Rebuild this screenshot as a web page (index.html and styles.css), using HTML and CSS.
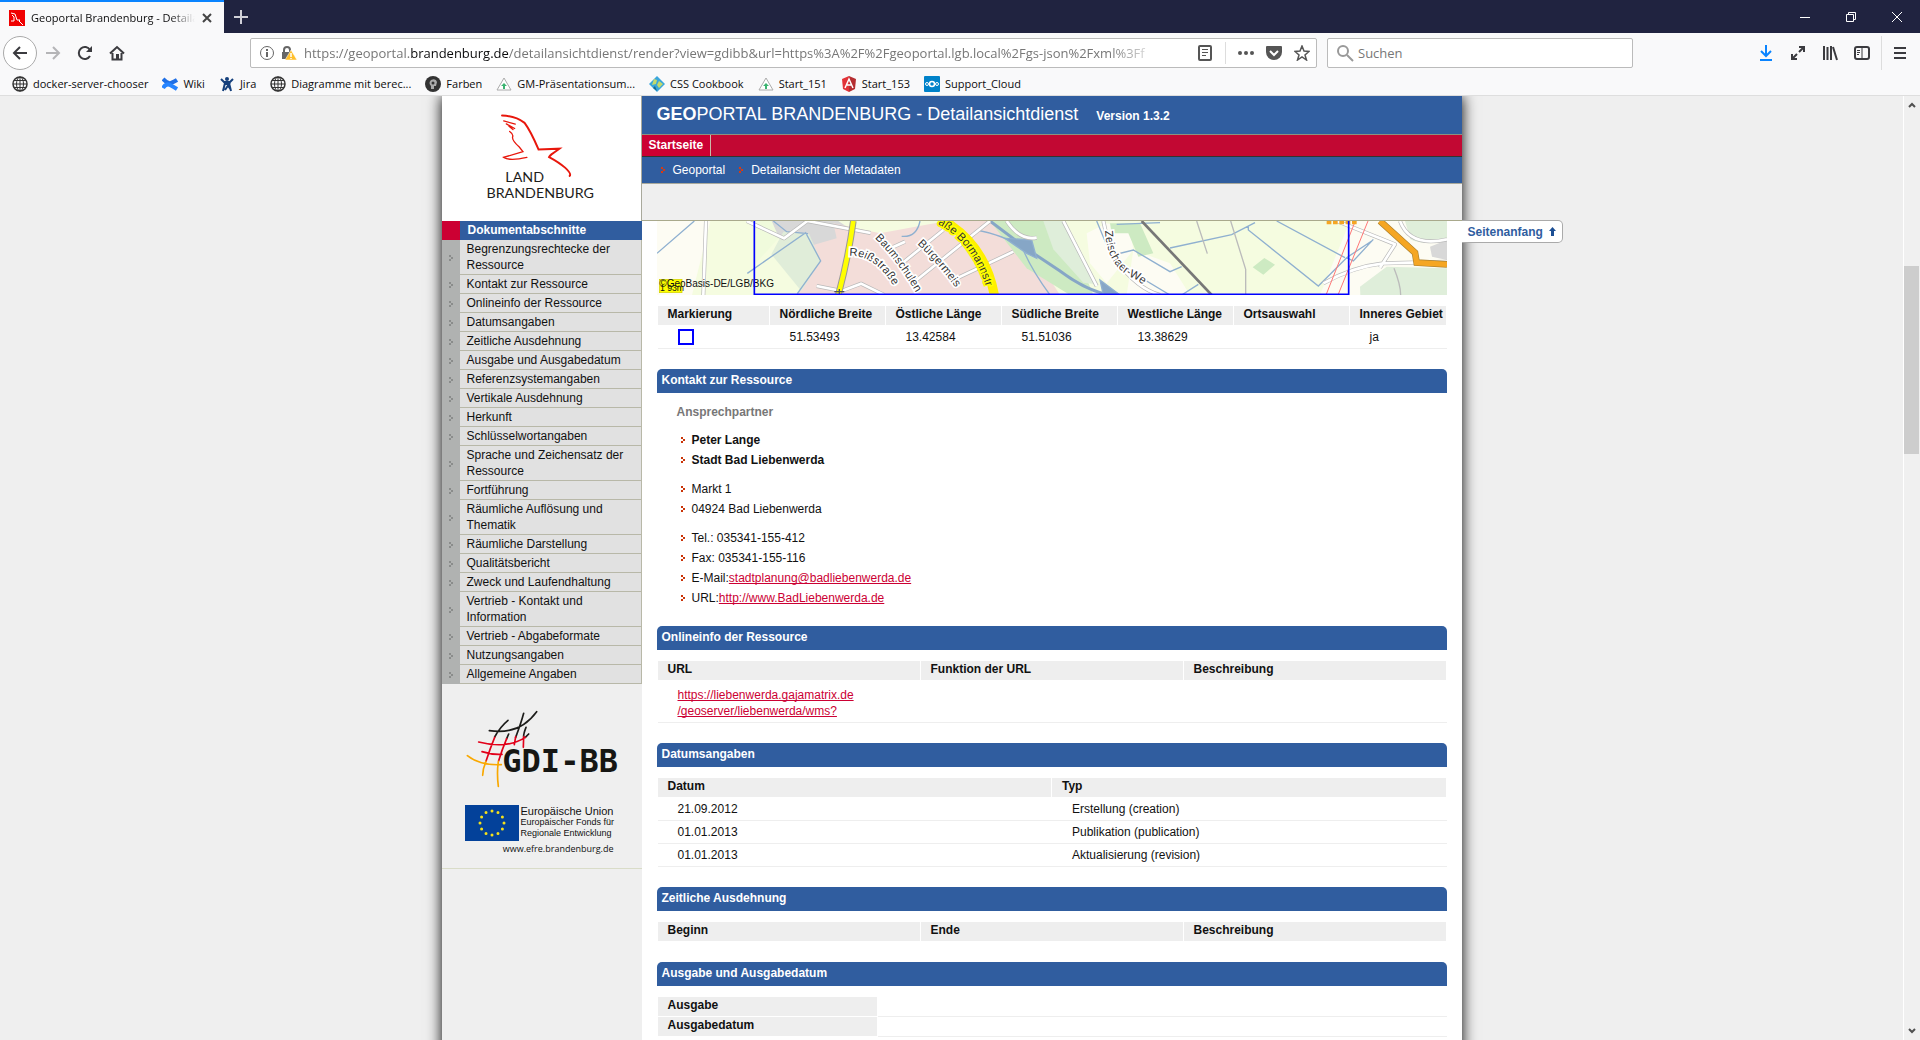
FILE: index.html
```html
<!DOCTYPE html>
<html lang="de">
  <head>
    <meta charset="UTF-8" />
    <title>Geoportal Brandenburg - Detailansichtdienst</title>
    <link rel="stylesheet" href="styles.css">
  </head>
  <body>
    <header class="browser">
      <div class="tabs">
        <div class="tab">
          <svg class="favicon" width="16" height="16" viewBox="0 0 16 16"><rect width="16" height="16" fill="#f00000" /><path d="M2 3l4 1 2 6h3l-1 1 4 4M3 5l2 2v4H2" fill="none" stroke="#fff" /></svg>
          <span class="tab-title">Geoportal Brandenburg - Detailansicht</span>
          <button aria-label="Tab schließen"><svg width="12" height="12" viewBox="0 0 12 12"><path d="M2 2l8 8M10 2l-8 8" stroke="#444" stroke-width="2" /></svg></button>
        </div>
        <button class="new-tab" aria-label="Neuer Tab"><svg width="14" height="14" viewBox="0 0 14 14"><path d="M7 0v14M0 7h14" stroke="#d0d0d8" stroke-width="2" /></svg></button>
        <div class="window-buttons">
          <button aria-label="Minimieren"><svg width="10" height="10" viewBox="0 0 10 10"><path d="M0 5.500h10" stroke="#fff" /></svg></button>
          <button aria-label="Verkleinern"><svg width="10" height="10" viewBox="0 0 10 10"><path d="M.5 2.500h7v7h-7zM2.500 2.500v-2h7v7h-2" fill="none" stroke="#fff" /></svg></button>
          <button aria-label="Schließen"><svg width="10" height="10" viewBox="0 0 10 10"><path d="M0 0l10 10M10 0L0 10" stroke="#fff" /></svg></button>
        </div>
      </div>

      <div class="toolbar">
        <button class="back" aria-label="Zurück"><svg width="16" height="16" viewBox="0 0 16 16"><path d="M15 8H2M8 2L2 8l6 6" fill="none" stroke="#3b3b3f" stroke-width="2" /></svg></button>
        <button class="tool" aria-label="Vor"><svg width="16" height="16" viewBox="0 0 16 16"><path d="M1 8h13M8 2l6 6-6 6" fill="none" stroke="#b5b5b7" stroke-width="2" /></svg></button>
        <button class="tool" aria-label="Neu laden"><svg width="16" height="16" viewBox="0 0 16 16"><path d="M13 11a6 6 0 1 1 0-6" fill="none" stroke="#3b3b3f" stroke-width="2" /><path d="M15 1v6H9z" fill="#3b3b3f" /></svg></button>
        <button class="tool" aria-label="Startseite"><svg width="16" height="16" viewBox="0 0 16 16"><path d="M1 8.500L8 2l7 6.500M3.500 8v6.500h9V8" fill="none" stroke="#3b3b3f" stroke-width="2" /><path d="M7 9h3v5H7z" fill="#3b3b3f" /></svg></button>
        <form class="urlbar">
          <svg width="16" height="16" viewBox="0 0 16 16"><circle cx="8" cy="8" r="6.500" fill="none" stroke="#666" /><path d="M8 7v5M8 4v2" stroke="#666" stroke-width="2" /></svg>
          <svg class="lock" width="16" height="16" viewBox="0 0 16 16"><path d="M3 7V5a3 3 0 0 1 6 0v2" fill="none" stroke="#666" stroke-width="2" /><path d="M1 7h10v7H1z" fill="#666" /><path d="M10 5l6 10H4z" fill="#ffbf2b" stroke="#fff" stroke-width=".5" /><path d="M10 8v4M10 13v1" stroke="#fff" stroke-width="1.500" /></svg>
          <div class="url" tabindex="0" role="textbox" aria-label="Adresse">https://geoportal.<b>brandenburg.de</b>/detailansichtdienst/render?view=gdibb&amp;url=https%3A%2F%2Fgeoportal.lgb.local%2Fgs-json%2Fxml%3Ff</div>
          <button type="button" aria-label="Leseansicht"><svg width="16" height="16" viewBox="0 0 16 16"><rect x="2" y="1" width="12" height="14" rx="1" fill="none" stroke="#555" stroke-width="2" /><path d="M5 4.500h6M5 7.500h6M5 10.500h4" stroke="#555" /></svg></button>
          <span class="divider"></span>
          <button type="button" aria-label="Aktionen"><svg width="16" height="16" viewBox="0 0 16 16" fill="#555"><circle cx="2" cy="8" r="2" /><circle cx="8" cy="8" r="2" /><circle cx="14" cy="8" r="2" /></svg></button>
          <button type="button" aria-label="Pocket"><svg width="16" height="16" viewBox="0 0 16 16"><path d="M1 1h14q1 0 1 1v5a8 8 0 0 1-16 0V2q0-1 1-1z" fill="#555" /><path d="M4 6l4 4 4-4" fill="none" stroke="#fff" stroke-width="2" /></svg></button>
          <button type="button" aria-label="Lesezeichen"><svg width="16" height="16" viewBox="0 0 16 16"><path d="M8 1l2 5 5 .5-4 3.500 1.500 5L8 12l-4.500 3L5 10 1 6.500 6 6z" fill="none" stroke="#555" stroke-width="1.500" /></svg></button>
        </form>
        <form class="searchbar">
          <svg width="18" height="18" viewBox="0 0 18 18"><circle cx="7" cy="7" r="5" fill="none" stroke="#999" stroke-width="2" /><path d="M11 11l6 6" stroke="#999" stroke-width="2" /></svg>
          <input type="text" placeholder="Suchen" aria-label="Suchen" />
        </form>
        <div class="tools">
          <button class="tool" aria-label="Downloads"><svg width="16" height="16" viewBox="0 0 16 16"><path d="M8 0v11M3 6l5 5 5-5M2 15h12" fill="none" stroke="#0a84ff" stroke-width="2" /></svg></button>
          <button class="tool" aria-label="Vollbild"><svg width="16" height="16" viewBox="0 0 16 16"><path d="M9 7l5-5M9 2h5v5M7 9l-5 5M2 9v5h5" fill="none" stroke="#3b3b3f" stroke-width="2" /></svg></button>
          <button class="tool" aria-label="Bibliothek"><svg width="16" height="16" viewBox="0 0 16 16"><path d="M2 1v14M5.500 2v13M9 1v14M11 2l4 13" stroke="#3b3b3f" stroke-width="2" /></svg></button>
          <button class="tool" aria-label="Seitenleisten"><svg width="16" height="16" viewBox="0 0 16 16"><rect x="1" y="2" width="14" height="12" rx="2" fill="none" stroke="#3b3b3f" stroke-width="2" /><path d="M8 2v12" stroke="#3b3b3f" /><path d="M3 5.500h3M3 7.500h3M3 9.500h2" stroke="#3b3b3f" /></svg></button>
          <button class="tool menu" aria-label="Menü"><svg width="16" height="16" viewBox="0 0 16 16"><path d="M2 3h12M2 8h12M2 13h12" stroke="#3b3b3f" stroke-width="2" /></svg></button>
        </div>
      </div>

      <nav class="bookmarks">
        <a href="#"><svg width="16" height="16" viewBox="0 0 16 16" fill="none" stroke="#333"><circle cx="8" cy="8" r="7" stroke-width="1.500" /><ellipse cx="8" cy="8" rx="3.500" ry="7" /><path d="M8 1v14M1 8h14M2 4.500h12M2 11.500h12" /></svg>docker-server-chooser</a>
        <a href="#"><svg width="16" height="16" viewBox="0 0 16 16" fill="none" stroke="#2684ff" stroke-width="4"><path d="M1 3q5 5 8 4t6-3" stroke="#1f6fe5" /><path d="M1 12q3-5 7-3t7 4" /></svg>Wiki</a>
        <a href="#"><svg width="16" height="16" viewBox="0 0 16 16"><circle cx="8" cy="3" r="2" fill="#15407c" /><path d="M2 3l4 4-2 8M14 3l-4 4 2 8M5 6h6M6 8h4l-4 6M10 8v3l2 3" fill="none" stroke="#15407c" stroke-width="2" /></svg>Jira</a>
        <a href="#"><svg width="16" height="16" viewBox="0 0 16 16" fill="none" stroke="#333"><circle cx="8" cy="8" r="7" stroke-width="1.500" /><ellipse cx="8" cy="8" rx="3.500" ry="7" /><path d="M8 1v14M1 8h14M2 4.500h12M2 11.500h12" /></svg>Diagramme mit berec...</a>
        <a href="#"><svg width="16" height="16" viewBox="0 0 16 16"><circle cx="8" cy="8" r="8" fill="#333" /><path d="M6 13v-3Q3 7 6 4q5-2 6 2l-1 4H9v3z" fill="#aaa" /><circle cx="8" cy="7" r="1.500" fill="#333" /></svg>Farben</a>
        <a href="#"><svg width="16" height="16" viewBox="0 0 16 16"><path d="M8 2l7 12H1z" fill="#fff" stroke="#aaa" /><path d="M8 7l3 3H9v3H7v-3H5z" fill="#3cb371" /></svg>GM-Präsentationsum...</a>
        <a href="#"><svg width="16" height="16" viewBox="0 0 16 16"><path d="M8 0l8 8-8 8-8-8z" fill="#3aa6dc" /><path d="M5 3l3 1-1 4-4 1zM10 5l4 3-4 4-2-3z" fill="#c5d96b" /><path d="M6 10l2 5-4-3z" fill="#16688f" /></svg>CSS Cookbook</a>
        <a href="#"><svg width="16" height="16" viewBox="0 0 16 16"><path d="M8 2l7 12H1z" fill="#fff" stroke="#aaa" /><path d="M8 7l3 3H9v3H7v-3H5z" fill="#3cb371" /></svg>Start_151</a>
        <a href="#"><svg width="16" height="16" viewBox="0 0 16 16"><path d="M8 0l7 3-1 10-6 3z" fill="#b52e31" /><path d="M8 0L1 3l1 10 6 3z" fill="#e23237" /><path d="M4 12l4-9 4 9M6 9h4" fill="none" stroke="#fff" stroke-width="1.500" /></svg>Start_153</a>
        <a href="#"><svg width="16" height="16" viewBox="0 0 16 16"><rect width="16" height="16" rx="1" fill="#0082c9" /><g fill="none" stroke="#fff"><circle cx="8" cy="8" r="2.500" stroke-width="1.500" /><circle cx="3" cy="8" r="1.500" /><circle cx="13" cy="8" r="1.500" /></g></svg>Support_Cloud</a>
      </nav>
    </header>

    <div class="viewport">
      <div class="scroll-content">
        <div class="page">
          <aside class="sidebar">
            <a href="#" class="logo" aria-label="Land Brandenburg">
              <svg viewBox="36 18 600 375">
                <g fill="none" stroke="#e8170c" stroke-linecap="round">
                  <path d="M217 76q40 1 68 22 18 24 42 80l63-2q-14 10-24 17-5 4-7 8 30 16 48 32 20 18 14 25" stroke-width="6" />
                  <path d="M222 92l35 10M230 101l25 14M238 108l12 10M240 124q12 8 9 16-3 10 20 31l11 14-58 17q18 12 70 0" stroke-width="4" />
                </g>
                <g class="logo-text">
                  <text x="227" y="277">LAND</text>
                  <text x="170" y="325">BRANDENBURG</text>
                </g>
              </svg>
            </a>
            <h2>Dokumentabschnitte</h2>
            <ul class="sections">
              <li><a href="#">Begrenzungsrechtecke der Ressource</a></li>
              <li><a href="#kontakt">Kontakt zur Ressource</a></li>
              <li><a href="#onlineinfo">Onlineinfo der Ressource</a></li>
              <li><a href="#datum">Datumsangaben</a></li>
              <li><a href="#zeit">Zeitliche Ausdehnung</a></li>
              <li><a href="#ausgabe">Ausgabe und Ausgabedatum</a></li>
              <li><a href="#">Referenzsystemangaben</a></li>
              <li><a href="#">Vertikale Ausdehnung</a></li>
              <li><a href="#">Herkunft</a></li>
              <li><a href="#">Schlüsselwortangaben</a></li>
              <li><a href="#">Sprache und Zeichensatz der Ressource</a></li>
              <li><a href="#">Fortführung</a></li>
              <li><a href="#">Räumliche Auflösung und Thematik</a></li>
              <li><a href="#">Räumliche Darstellung</a></li>
              <li><a href="#">Qualitätsbericht</a></li>
              <li><a href="#">Zweck und Laufendhaltung</a></li>
              <li><a href="#">Vertrieb - Kontakt und Information</a></li>
              <li><a href="#">Vertrieb - Abgabeformate</a></li>
              <li><a href="#">Nutzungsangaben</a></li>
              <li><a href="#">Allgemeine Angaben</a></li>
            </ul>
            <div class="partners">
              <svg class="gdi" viewBox="36 12 600 351">
                <g fill="none" stroke-width="5" stroke-linecap="round">
                  <path d="M178 152q90 14 142-57M234 121q-24 20-40 50M281 100q-8 30-24 72M288 142q-8 20-7 30M236 162l-6 14M296 162l-10 10" stroke="#1d1d1b" />
                  <path d="M146 186q85 22 140-14M156 215q32 10 60 8M194 172q-14 34-26 72M230 176q-15 36-24 66M257 170l-4 24M281 170l-1 32" stroke="#e2001a" />
                  <path d="M112 227q38 30 102 27M168 244q-9 20-10 42M205 244q-5 36 0 75" stroke="#f9a800" />
                </g>
                <text x="217" y="277" class="gdi-text">GDI-BB</text>
              </svg>
              <div class="eu">
                <svg width="54" height="36" viewBox="0 0 54 36">
                  <rect width="54" height="36" fill="#03419a" />
                  <circle cx="27" cy="18" r="12" fill="none" stroke="#f5e11b" stroke-width="3" stroke-linecap="round" pathLength="120" stroke-dasharray="0 10" />
                </svg>
                <p><strong>Europäische Union</strong>Europäischer Fonds für<br />Regionale Entwicklung</p>
                <a href="#">www.efre.brandenburg.de</a>
              </div>
            </div>
          </aside>

          <main>
            <div class="title">
              <h1><b>GEO</b>PORTAL BRANDENBURG - Detailansichtdienst</h1>
              <span>Version 1.3.2</span>
            </div>
            <nav class="mainnav"><a href="#">Startseite</a></nav>
            <nav class="breadcrumb"><a href="#">Geoportal</a><a href="#">Detailansicht der Metadaten</a></nav>
            <div class="spacer"></div>

            <div class="content">
              <svg class="map" viewBox="51 393 2370 222">
                <rect x="51" y="393" width="2370" height="222" fill="#f5fce0" />
                <path d="M51 393h160l-55 222H51z" fill="#fdfcf3" />
                <path d="M345 393h60l30 30-90 100z" fill="#f0fbdc" />
                <path d="M395 393h200l120 80-100 20-110-30-90-25z" fill="#d8d8d8" />
                <path d="M580 400l140 30 200-37h130l170 160 40 62H470l70-100-20-50 70-20z" fill="#f3ddd9" />
                <path d="M430 425l78 8 34 80-58 90-90-110z" fill="#e0edd9" />
                <path d="M1050 393h220l90 222h-70l-130-80z" fill="#cdeac2" />
                <path d="M1210 393h60l100 190-40-5-90-100z" fill="#dfeeda" />
                <path d="M1340 430l60-30 70 20 10 60-80 100-50-60zM1480 480l110 40 60 95h-190z" fill="#fdfcf3" />
                <path d="M1410 400h90l40 90-45 10-30-70h-50zM1838 532l35-28 32 20-35 30z" fill="#cdeac2" />
                <path d="M2130 393h290v222h-380z" fill="#fdfcf3" />
                <path d="M2295 393h126v60q-70 15-110-5zM2160 590l80-60 181 5v80h-260z" fill="#dfeeda" />
                <path d="M2370 470l51-20v60l-45-10z" fill="#d8d8d8" />
                <!-- Gewässer -->
                <g fill="none" stroke="#8fb0d0" stroke-width="4">
                  <path d="M51 490l112-97M322 550l175-122 45 85-70 98M400 393l40 32 64 6M840 393q-10 50-55 46M1010 420q100 20 140 60 25 60 80 135M1420 495l60-15 110 65 35-15M1430 403l130-5M1590 474l185-40 70-36M1825 410v10l210 168 85-85 75-50M1910 393l205 110M1370 393l50 120 170 102M2120 503l20 10 60-65M1625 615l50-32" />
                  <path d="M1050 393l120 90 90 60q80 60 150 72" stroke="#86a6c6" stroke-width="9" />
                  <path d="M1095 445l80 5 15 55-30-15zM1380 570l60 45h-50z" fill="#86a6c6" />
                </g>
                <!-- Wege und Straßen -->
                <g fill="none" stroke="#b9b9b9" stroke-width="12" stroke-linejoin="round">
                  <path d="M198 393l-8 222M320 393l112 52 70-52 190 36M530 588l75 15 58-22 70 34M740 480l55-25M780 525l130-105M830 570q100-80 220-177M950 565l170-80M1100 393q40 60 90 50M1270 393l100 195M1390 393l20 90q70 110 150 132" />
                  <path d="M2090 393l175 70-45 70M2050 580q90-50 180-60l191-5M2280 393q30 80 141 55" />
                </g>
                <g fill="none" stroke="#fff" stroke-width="8" stroke-linejoin="round">
                  <path d="M198 393l-8 222M320 393l112 52 70-52 190 36M530 588l75 15 58-22 70 34M740 480l55-25M780 525l130-105M830 570q100-80 220-177M950 565l170-80M1100 393q40 60 90 50M1270 393l100 195M1390 393l20 90q70 110 150 132" />
                  <path d="M2090 393l175 70-45 70M2050 580q90-50 180-60l191-5M2280 393q30 80 141 55" />
                </g>
                <path d="M1505 393l210 222" stroke="#777" stroke-width="8" />
                <path d="M1670 393l32 98M1772 393l45 145v77M2262 535q20 50 20 80" fill="none" stroke="#bbb" stroke-width="4" />
                <path d="M2146 393l-88 222M2184 393l-90 222" stroke="#f77" stroke-width="3" />
                <path d="M2220 393l105 95 5 30 91 5" fill="none" stroke="#a98030" stroke-width="20" />
                <path d="M2220 393l105 95 5 30 91 5" fill="none" stroke="#f5a623" stroke-width="16" />
                <path d="M640 393q-15 110-45 222" fill="none" stroke="#999" stroke-width="20" />
                <path d="M640 393q-15 110-45 222" fill="none" stroke="#ff0" stroke-width="14" />
                <path d="M905 388q130 75 158 227" fill="none" stroke="#fff000" stroke-width="28" />
                <path d="M2060 396h90" stroke="#f5a623" stroke-width="14" stroke-dasharray="14 5" />
                <path d="M583 605h30M598 597v18" stroke="#555" stroke-width="4" />
                <defs>
                  <path id="reiss" d="M628 498q88-5 152 125" />
                  <path id="baum" d="M704 444q80 80 138 190" />
                  <path id="buerger" d="M832 462q80 75 145 175" />
                  <path id="bormann" d="M893 402q125 65 160 250" />
                  <path id="zeisch" d="M1395 422q5 110 90 145l110 75" />
                </defs>
                <g class="street">
                  <text><textPath href="#reiss">Reißstraße</textPath></text>
                  <text><textPath href="#baum">Baumschulen</textPath></text>
                  <text><textPath href="#buerger">Bürgermeis</textPath></text>
                  <text class="main-street"><textPath href="#bormann">aße Bormannstr</textPath></text>
                  <text><textPath href="#zeisch">Zeischaer-We</textPath></text>
                </g>
                <rect x="58" y="568" width="68" height="40" fill="#ff0" stroke="#cc0" stroke-width="2" />
                <text x="60" y="602" class="scale">1 93m</text>
                <text x="58" y="590" class="copyright">©GeoBasis-DE/LGB/BKG</text>
                <path d="M343 390v223h1783V390" fill="none" stroke="#00f" stroke-width="5" />
              </svg>

              <table class="extent">
                <thead>
                  <tr><th>Markierung</th><th>Nördliche Breite</th><th>Östliche Länge</th><th>Südliche Breite</th><th>Westliche Länge</th><th>Ortsauswahl</th><th>Inneres Gebiet</th></tr>
                </thead>
                <tbody>
                  <tr><td><span class="marker"></span></td><td>51.53493</td><td>13.42584</td><td>51.51036</td><td>13.38629</td><td></td><td>ja</td></tr>
                </tbody>
              </table>

              <h3 id="kontakt">Kontakt zur Ressource</h3>
              <div class="contact">
                <h4>Ansprechpartner</h4>
                <ul>
                  <li><b>Peter Lange</b></li>
                  <li><b>Stadt Bad Liebenwerda</b></li>
                </ul>
                <ul>
                  <li>Markt 1</li>
                  <li>04924 Bad Liebenwerda</li>
                </ul>
                <ul>
                  <li>Tel.: 035341-155-412</li>
                  <li>Fax: 035341-155-116</li>
                  <li>E-Mail:<a href="mailto:stadtplanung@badliebenwerda.de">stadtplanung@badliebenwerda.de</a></li>
                  <li>URL:<a href="http://www.BadLiebenwerda.de">http://www.BadLiebenwerda.de</a></li>
                </ul>
              </div>

              <h3 id="onlineinfo">Onlineinfo der Ressource</h3>
              <table class="online">
                <thead>
                  <tr><th>URL</th><th>Funktion der URL</th><th>Beschreibung</th></tr>
                </thead>
                <tbody>
                  <tr><td><a href="https://liebenwerda.gajamatrix.de/geoserver/liebenwerda/wms?">https://liebenwerda.gajamatrix.de<br />/geoserver/liebenwerda/wms?</a></td><td></td><td></td></tr>
                </tbody>
              </table>

              <h3 id="datum">Datumsangaben</h3>
              <table>
                <thead>
                  <tr><th>Datum</th><th>Typ</th></tr>
                </thead>
                <tbody>
                  <tr><td>21.09.2012</td><td>Erstellung (creation)</td></tr>
                  <tr><td>01.01.2013</td><td>Publikation (publication)</td></tr>
                  <tr><td>01.01.2013</td><td>Aktualisierung (revision)</td></tr>
                </tbody>
              </table>

              <h3 id="zeit">Zeitliche Ausdehnung</h3>
              <table>
                <thead>
                  <tr><th>Beginn</th><th>Ende</th><th>Beschreibung</th></tr>
                </thead>
              </table>

              <h3 id="ausgabe">Ausgabe und Ausgabedatum</h3>
              <table class="rows">
                <tbody>
                  <tr><th>Ausgabe</th><td></td></tr>
                  <tr><th>Ausgabedatum</th><td></td></tr>
                </tbody>
              </table>
            </div>
          </main>

          <a href="#" class="to-top">Seitenanfang <svg width="7" height="9" viewBox="0 0 7 9"><path d="M3.500 0L7 4H5v5H2V4H0z" fill="#1c4f94" /></svg></a>
        </div>
      </div>

      <div class="scrollbar">
        <svg width="8" height="6" viewBox="0 0 8 6"><path d="M1 5l3-3 3 3" fill="none" stroke="#505050" stroke-width="2" /></svg>
        <div class="track"><div class="thumb"></div></div>
        <svg width="8" height="6" viewBox="0 0 8 6"><path d="M1 1l3 3 3-3" fill="none" stroke="#505050" stroke-width="2" /></svg>
      </div>
    </div>
  </body>
</html>
```
FILE: styles.css
```css
* {
  box-sizing: border-box;
}

body {
  display: flex;
  flex-direction: column;
  height: 100vh;
  margin: 0;
  overflow: hidden;
  background: #efefef;
  color: #111;
  font: 12px/16px "Liberation Sans", Arial, sans-serif;
}

h1,
h2,
h3,
h4,
p,
ul {
  margin: 0;
  padding: 0;
}

ul {
  list-style: none;
}

a {
  color: inherit;
  text-decoration: none;
}

button {
  display: flex;
  align-items: center;
  justify-content: center;
  padding: 0;
  border: none;
  background: none;
}

svg {
  display: block;
  flex: none;
}

/* Browser */

.browser {
  flex: none;
  height: 96px;
  border-bottom: 1px solid #dedede;
  background: #f9f9fa;
  color: #0c0c0d;
  font-family: "Open Sans", "Noto Sans", sans-serif;
}

.tabs {
  display: flex;
  height: 33px;
  background: #202340;
}

.tab {
  display: flex;
  align-items: center;
  width: 224px;
  padding: 0 11px 0 9px;
  border-top: 2px solid #0a84ff;
  background: #f9f9fa;
}

.tab-title {
  flex: 1;
  margin: 0 6px;
  overflow: hidden;
  white-space: nowrap;
  font-size: 11px;
  mask-image: linear-gradient(to right, #000 85%, transparent);
}

.new-tab {
  width: 34px;
}

.window-buttons {
  display: flex;
  margin-left: auto;
}

.window-buttons button {
  width: 46px;
}

.toolbar {
  display: flex;
  align-items: center;
  height: 40px;
  padding: 0 3px;
}

.back {
  width: 34px;
  height: 34px;
  border: 1px solid #aaa;
  border-radius: 50%;
  background: #fff;
}

.tool {
  width: 32px;
  height: 30px;
}

.urlbar,
.searchbar {
  display: flex;
  align-items: center;
  height: 30px;
  border: 1px solid #bbb;
  border-radius: 2px;
  background: #fff;
}

.urlbar {
  flex: 1;
  gap: 12px;
  min-width: 0;
  margin-left: 117px;
  padding: 0 6px 0 8px;
}

.urlbar .lock {
  margin-left: -6px;
}

.url {
  flex: 1;
  min-width: 0;
  margin: 0 24px 0 -5px;
  overflow: hidden;
  white-space: nowrap;
  color: #777;
  font-size: 13px;
  mask-image: linear-gradient(to right, #000 94%, transparent);
}

.url b {
  color: #0c0c0d;
  font-weight: normal;
}

.divider {
  width: 1px;
  height: 22px;
  background: #ddd;
}

.searchbar {
  width: 306px;
  margin-left: 10px;
  padding: 0 8px;
}

.searchbar input {
  flex: 1;
  min-width: 0;
  padding: 0 4px;
  border: none;
  outline: none;
  font: 13px "Open Sans", sans-serif;
}

.searchbar input::placeholder {
  color: #777;
}

.tools {
  display: flex;
  align-items: center;
  margin-left: 117px;
}

.tools .menu {
  width: 36px;
  height: 34px;
  margin-left: 3px;
  border-left: 1px solid #ddd;
}

.bookmarks {
  display: flex;
  align-items: center;
  gap: 14px;
  height: 21px;
  padding-left: 12px;
  font-size: 11px;
}

.bookmarks a {
  display: flex;
  align-items: center;
  gap: 5px;
  white-space: nowrap;
}

/* Viewport */

.viewport {
  display: flex;
  flex: 1;
  min-height: 0;
}

.scroll-content {
  flex: 1;
  overflow: hidden;
}

.scrollbar {
  display: flex;
  flex-direction: column;
  align-items: center;
  width: 17px;
  padding: 6px 0;
  border-left: 1px solid #fff;
  background: #f0f0f0;
}

.track {
  flex: 1;
  width: 100%;
  padding: 158px 1px 0 0;
}

.thumb {
  height: 188px;
  background: #cdcdcd;
}

/* Seite */

.page {
  position: relative;
  display: grid;
  grid-template-columns: 200px 1fr;
  max-width: 1020px;
  min-height: 100%;
  margin: 0 auto;
  background: #fff;
  box-shadow: 0 0 14px #000;
}

.sidebar {
  background: #efefef;
}

.logo {
  display: block;
  border-right: 1px solid #a9a99c;
  background: #fff;
}

.logo svg {
  width: 100%;
  height: 125px;
}

.logo-text {
  fill: #1d1d1b;
  font: 43px Lato, sans-serif;
}

.sidebar h2 {
  height: 19px;
  padding-left: 8px;
  border-left: 18px solid #cc0033;
  background: #305d9f;
  color: #fff;
  font-size: 12px;
  line-height: 19px;
}

.sections li {
  display: flex;
  align-items: center;
  padding-left: 7px;
  border-right: 1px solid #b8b8a8;
  background: linear-gradient(to right, #b0b2b1 18px, #e1e1e1 18px);
}

.sections li::before {
  margin-right: 7px;
  color: #8a8c8b;
}

.sections a {
  flex: 1;
  padding: 1px 4px 1px 7px;
  border-bottom: 1px solid #b8b8a8;
}

.sections li::before,
.contact li::before,
.breadcrumb a::before {
  content: "";
  flex: none;
  width: 4px;
  height: 6px;
  background: linear-gradient(currentColor, currentColor) 0 0 / 2px 2px no-repeat,
    linear-gradient(currentColor, currentColor) 2px 2px / 2px 2px no-repeat,
    linear-gradient(currentColor, currentColor) 0 4px / 2px 2px no-repeat;
}

.partners {
  padding-bottom: 11px;
  border-bottom: 1px solid #d9dcc8;
}

.gdi {
  width: 100%;
}

.gdi-text {
  fill: #161613;
  font: bold 96px "DejaVu Sans Mono", monospace;
}

.eu {
  display: grid;
  grid-template-columns: 54px 1fr;
  column-gap: 2px;
  margin-top: 4px;
  padding: 0 20px 0 23px;
}

.eu p {
  font-size: 9px;
  line-height: 11px;
  white-space: nowrap;
}

.eu strong {
  display: block;
  font-size: 11px;
  font-weight: normal;
  line-height: 12px;
}

.eu a {
  grid-column: 1 / 3;
  padding-right: 8px;
  font: 9px/16px "Open Sans", sans-serif;
  text-align: right;
}

.title {
  display: flex;
  align-items: baseline;
  gap: 18px;
  height: 39px;
  padding: 6px 15px 0;
  border-bottom: 1px solid #8c9080;
  background: #305d9f;
  color: #fff;
  white-space: nowrap;
}

.title h1 {
  font-size: 18px;
  font-weight: normal;
  line-height: 24px;
}

.title span {
  font-weight: bold;
}

.mainnav {
  display: flex;
  height: 22px;
  border-bottom: 1px solid #333;
  background: #c20833;
  color: #fff;
  font-weight: bold;
  line-height: 20px;
}

.mainnav a {
  padding: 0 7px;
  border-right: 1px solid #c9b9a9;
  background: #cc0033;
}

.breadcrumb {
  display: flex;
  gap: 14px;
  height: 27px;
  padding-left: 19px;
  border-bottom: 1px solid #a9a99c;
  background: #305d9f;
  color: #fff;
}

.breadcrumb a {
  display: flex;
  align-items: center;
}

.breadcrumb a::before {
  margin-right: 8px;
  color: #d93a10;
}

.spacer {
  height: 37px;
  border-bottom: 1px solid #a9a98c;
  background: #efefef;
}

.content {
  padding: 0 15px;
}

.map {
  width: 100%;
  margin-bottom: 11px;
}

.street {
  fill: #333;
  stroke: #fff;
  stroke-width: 10px;
  paint-order: stroke;
  font: 34px "Liberation Sans", Arial, sans-serif;
}

.main-street {
  stroke: #ff0;
}

.scale,
.copyright {
  fill: #111;
  font: 30px "Liberation Sans", Arial, sans-serif;
}

.scale {
  font-size: 26px;
}

table {
  width: calc(100% - 1px);
  margin: 0 0 20px 1px;
  border-spacing: 0;
  table-layout: fixed;
}

th {
  height: 20px;
  padding: 0 0 3px 10px;
  border: solid #fff;
  border-width: 0 1px 1px 0;
  background: #eee;
  background-clip: padding-box;
  text-align: left;
  white-space: nowrap;
}

td {
  padding: 3px 0 3px 20px;
  border-bottom: 1px solid #eee;
}

.extent th {
  width: 116px;
}

.extent th:first-child {
  width: 112px;
}

.extent th:last-child {
  width: auto;
}

.marker {
  display: block;
  width: 16px;
  height: 16px;
  border: 2px solid #00f;
}

.online td {
  padding-top: 6px;
}

.rows th {
  width: 28%;
}

.rows td {
  padding: 0;
}

h3 {
  height: 24px;
  margin-bottom: 11px;
  padding-left: 5px;
  border-radius: 5px 5px 0 0;
  background: #305d9f;
  color: #fff;
  font-size: 12px;
  line-height: 23px;
}

.contact {
  padding: 0 20px 9px;
}

.contact h4 {
  margin-bottom: 10px;
  color: #777;
  font-size: 12px;
}

.contact ul {
  margin-bottom: 9px;
  padding-left: 4px;
}

.contact li {
  display: flex;
  align-items: center;
  height: 20px;
}

.contact li::before {
  margin-right: 7px;
  color: #c93408;
}

.contact a,
.online a {
  color: #cc0033;
  text-decoration: underline;
  text-decoration-skip-ink: none;
}

/* hängt rechts neben der Seite */
.to-top {
  position: absolute;
  top: 124px;
  left: 100%;
  display: flex;
  align-items: center;
  gap: 6px;
  height: 23px;
  padding: 0 6px;
  border: 1px solid #aaa;
  border-left: none;
  border-radius: 0 5px 5px 0;
  background: #fff;
  color: #305d9f;
  font-weight: bold;
}
```
